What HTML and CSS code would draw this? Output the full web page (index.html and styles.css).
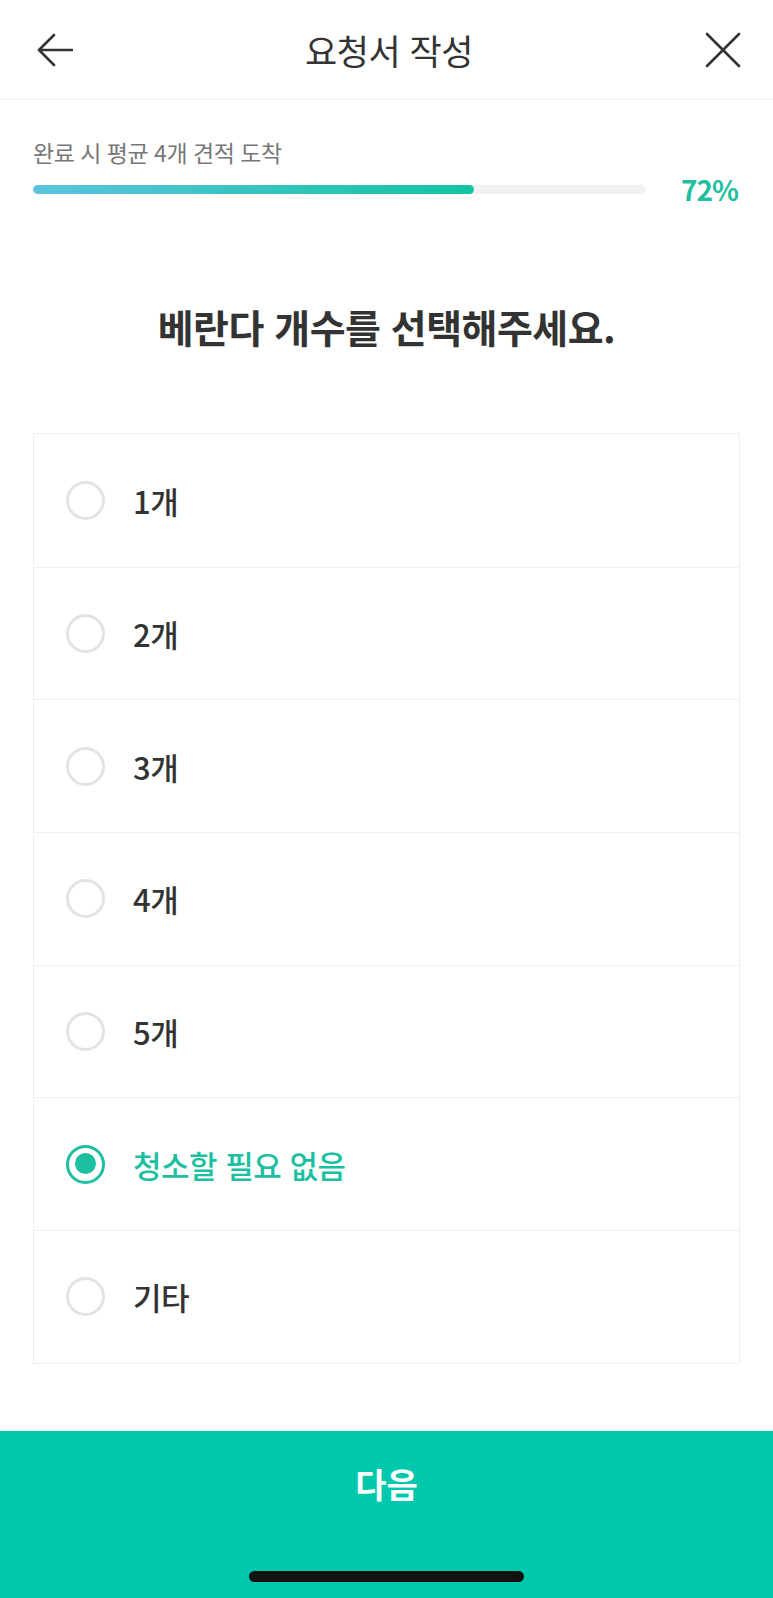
FILE: index.html
```html
<!DOCTYPE html>
<html lang="ko">
<head>
<meta charset="utf-8">
<link rel="stylesheet" href="styles.css">
</head>
<body>
<div class="page">
  <header class="topbar">
    <svg class="icon icon-back" viewBox="0 0 36 36" width="36" height="36"><path d="M35 18H2M17 3L2 18l15 15" fill="none" stroke="#333" stroke-width="2.6" stroke-linecap="round" stroke-linejoin="round"/></svg>
    <h1 class="title">요청서 작성</h1>
    <svg class="icon icon-close" viewBox="0 0 36 36" width="36" height="36"><path d="M2 2l32 32M34 2L2 34" fill="none" stroke="#333" stroke-width="2.6" stroke-linecap="round"/></svg>
  </header>
  <section class="progress">
    <div class="progress-label">완료 시 평균 4개 견적 도착</div>
    <div class="progress-row">
      <div class="track"><div class="fill" style="width:72%"></div></div>
      <div class="pct">72%</div>
    </div>
  </section>
  <h2 class="question">베란다 개수를 선택해주세요.</h2>
  <ul class="options">
    <li class="option"><span class="radio"></span><span class="opt-text">1개</span></li>
    <li class="option"><span class="radio"></span><span class="opt-text">2개</span></li>
    <li class="option"><span class="radio"></span><span class="opt-text">3개</span></li>
    <li class="option"><span class="radio"></span><span class="opt-text">4개</span></li>
    <li class="option"><span class="radio"></span><span class="opt-text">5개</span></li>
    <li class="option selected"><span class="radio"></span><span class="opt-text">청소할 필요 없음</span></li>
    <li class="option"><span class="radio"></span><span class="opt-text">기타</span></li>
  </ul>
  <footer class="next">
    <div class="next-text">다음</div>
    <div class="home-bar"></div>
  </footer>
</div>
</body>
</html>
```
FILE: styles.css
```css
* { box-sizing: border-box; }
html, body { margin: 0; padding: 0; background: #fff; }
body { font-family: "Noto Sans CJK KR", "Noto Sans", sans-serif; color: #333; }
.page { width: 773px; height: 1598px; display: flex; flex-direction: column; }
.topbar {
  height: 100px;
  border-bottom: 1px solid #f2f2f2;
  display: grid; grid-template-columns: 1fr auto 1fr; align-items: center;
  padding: 0 32px 0 37px;
}
.icon { display: block; }
.icon-close { justify-self: end; }
.title { margin: 0; font-size: 35px; font-weight: 400; color: #333; letter-spacing: -0.5px; line-height: 50px; }
.progress { padding: 37px 35px 0 33px; }
.progress-label { font-size: 23px; color: #777; line-height: 30px; letter-spacing: -0.5px; }
.progress-row { display: flex; align-items: center; margin-top: 5px; height: 34px; }
.track { width: 613px; height: 9px; border-radius: 5px; background: #f2f2f2; overflow: hidden; }
.fill { height: 100%; border-radius: 5px; background: linear-gradient(90deg, #5bc4df, #13c3a2); }
.pct { margin-left: auto; font-size: 28px; font-weight: 700; color: #1fbf9f; line-height: 34px; letter-spacing: -1px; }
.question { margin: 93px 0 0; text-align: center; font-size: 39px; font-weight: 700; color: #333; line-height: 54px; letter-spacing: -0.5px; }
.options {
  list-style: none; margin: 80px 33px 0 33px; padding: 0;
  border: 1px solid #efefef;
}
.option {
  height: 132.7px; display: flex; align-items: center;
  padding-left: 32px;
  border-top: 1px solid #efefef;
}
.option:first-child { border-top: none; }
.radio {
  width: 39px; height: 39px; border-radius: 50%;
  border: 3px solid #e3e3e3; flex: none; position: relative;
}
.opt-text { margin-left: 28px; font-size: 31px; font-weight: 500; color: #333; letter-spacing: -0.5px; }
.selected .radio { border-color: #1cbf9f; border-width: 3.5px; }
.selected .radio::after {
  content: ""; position: absolute; left: 5.5px; top: 5.5px; width: 21px; height: 21px;
  border-radius: 50%; background: #1cbf9f;
}
.selected .opt-text { color: #1cbf9f; }
.next {
  margin-top: auto; height: 167px; background: #00c8ad;
  display: flex; flex-direction: column; align-items: center;
}
.next-text { margin-top: 29px; font-size: 34px; font-weight: 700; color: #fff; line-height: 48px; }
.home-bar { margin-top: auto; margin-bottom: 16px; width: 275px; height: 11px; border-radius: 6px; background: #121212; }
```
